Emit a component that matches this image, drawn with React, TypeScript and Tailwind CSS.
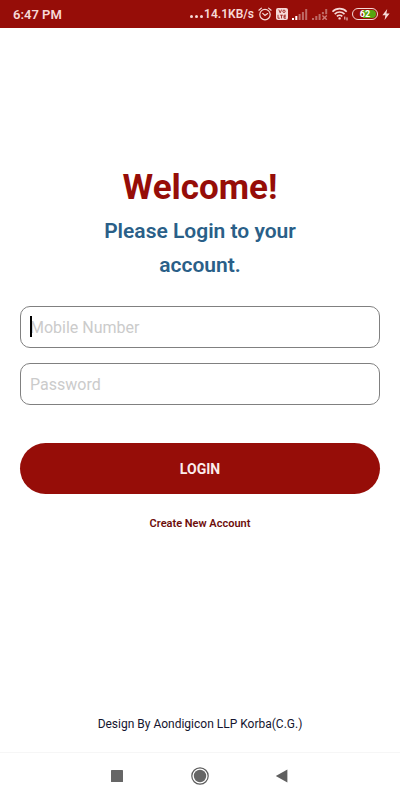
import React from 'react';

interface SignalProps {
  strong?: number;
  crossed?: boolean;
}

const AlarmIcon = () => (
  <svg className="h-[14px] w-[14px]" viewBox="0 0 14 14" fill="none" stroke="#f6d9d7" strokeWidth="1.2" strokeLinecap="round">
    <circle cx="7" cy="7.6" r="5.2" />
    <path d="M0.9 3.2 3.4 1.1M13.1 3.2 10.6 1.1" />
    <path d="M4.7 6.4 7 8.4 9.6 6.6" />
  </svg>
);

const VolteBadge = () => (
  <svg className="h-3 w-3" viewBox="0 0 12 12">
    <rect width="12" height="12" rx="2" fill="#f6d9d7" />
    <g fill="none" stroke="#960d08" strokeWidth="0.8">
      <path d="M2.8 1.6 4.2 4.8 5.6 1.6" />
      <circle cx="8" cy="3.3" r="1.2" />
      <path d="M2 6.8v3.4h1.8M4.2 7.2h2.6M5.5 7.2v3.2M10 7.2H8v3h2M8 8.7h1.8" />
    </g>
  </svg>
);

const SignalIcon: React.FC<SignalProps> = ({ strong = 0, crossed = false }) => {
  const heights = [2, 4, 6, 8, 11];
  return (
    <svg className="h-3 w-4" viewBox="0 0 16 12">
      {heights.map((h, i) =>
        crossed && i > 2 ? null : (
          <rect key={h} x={i * 3.3} y={12 - h} width="2" height={h} fill={i < strong ? '#fff' : '#bf6a66'} />
        )
      )}
      {crossed && (
        <>
          <rect x="9.9" y="4" width="2" height="2.2" fill="#bf6a66" />
          <rect x="13.2" y="1" width="2" height="5.2" fill="#bf6a66" />
          <path d="M10.4 7.4l4.4 4.4M14.8 7.4l-4.4 4.4" stroke="#cf7a76" strokeWidth="1.4" />
        </>
      )}
    </svg>
  );
};

const WifiIcon = () => (
  <svg className="h-[14px] w-4" viewBox="0 0 16 14" fill="none" stroke="#f6d9d7" strokeWidth="1.6">
    <path d="M0.5 4.7a9.8 9.8 0 0 1 14.2 0" />
    <path d="M2.7 7.1a6.8 6.8 0 0 1 9.8 0" />
    <path d="M4.9 9.4a3.8 3.8 0 0 1 5.4 0" />
    <circle cx="7.6" cy="11.4" r="1.2" fill="#f6d9d7" stroke="none" />
    <path d="M12.8 9.6v3M15 10.4v3" strokeWidth="1" />
  </svg>
);

const Battery = () => (
  <div className="flex h-3 w-[26px] rounded-full border border-[#f6d9d7] p-px">
    <div className="flex flex-1 items-center justify-center rounded-full bg-linear-to-r from-[#960d08] from-40% to-[#57a410] to-40% text-[9px] leading-none font-bold text-white">
      62
    </div>
  </div>
);

const BoltIcon = () => (
  <svg className="h-[11px] w-2" viewBox="0 0 8 11" fill="#f6d9d7">
    <path d="M5.2 0 0.4 6.2h3L2.6 11 7.6 4.4H4.4z" />
  </svg>
);

const StatusBar = () => (
  <header className="flex h-7 items-center justify-between bg-[#960d08] pr-[10px] pl-[13px] text-[12px] font-semibold text-[#f6d9d7]">
    <span className="pt-px text-[13px]">6:47 PM</span>
    <div className="flex items-center gap-1">
      <div className="flex items-center gap-px">
        <svg className="mt-1 h-[3px] w-[13px]" viewBox="0 0 13 3" fill="#f6d9d7">
          <circle cx="1.5" cy="1.5" r="1.5" />
          <circle cx="6.5" cy="1.5" r="1.5" />
          <circle cx="11.5" cy="1.5" r="1.5" />
        </svg>
        <span>14.1KB/s</span>
      </div>
      <AlarmIcon />
      <VolteBadge />
      <div className="flex gap-1">
        <SignalIcon strong={2} />
        <SignalIcon crossed />
      </div>
      <WifiIcon />
      <Battery />
      <BoltIcon />
    </div>
  </header>
);

const inputClass =
  'block h-[42px] w-full rounded-[10px] border border-[#808080] bg-white px-[9px] text-[16px] text-black outline-none placeholder:text-[#cbcbcb]';

const LoginForm = () => (
  <form className="flex flex-col" onSubmit={(e) => e.preventDefault()}>
    <div className="relative">
      <input className={inputClass} type="tel" aria-label="Mobile Number" placeholder="Mobile Number" />
      {/* Text cursor */}
      <span className="absolute top-[10px] left-[10px] h-[21px] w-0.5 bg-black" />
    </div>
    <input className={`${inputClass} mt-[15px]`} type="password" aria-label="Password" placeholder="Password" />
    <button type="submit" className="mt-[38px] h-[51px] rounded-full bg-[#960d08] pt-px text-[14px] font-bold text-[#fbeceb]">
      LOGIN
    </button>
    <a href="#register" className="mt-[22px] self-center text-[11px] leading-4 font-semibold text-[#6d0d0b]">
      Create New Account
    </a>
  </form>
);

const NavBar = () => (
  <nav className="flex h-12 items-center justify-center gap-[65px] border-t border-[#f6f6f6] pb-px">
    <button type="button" aria-label="Recent apps">
      <svg className="h-3 w-[18px]" viewBox="0 0 18 12">
        <rect x="3" width="12" height="12" rx="0.6" fill="#666" />
      </svg>
    </button>
    <button type="button" aria-label="Home">
      <svg className="h-[18px] w-[18px]" viewBox="0 0 18 18">
        <circle cx="9" cy="9" r="8.2" fill="none" stroke="#5c5c5c" strokeWidth="1.2" />
        <circle cx="9" cy="9" r="6.2" fill="#666" />
      </svg>
    </button>
    <button type="button" aria-label="Back">
      <svg className="h-[14px] w-[18px]" viewBox="0 0 18 14">
        <path d="M1.8 7 13.4 0.6v12.8z" fill="#5f5f5f" />
      </svg>
    </button>
  </nav>
);

export default function App() {
  return (
    <div className="flex min-h-screen flex-col bg-white font-[Roboto,sans-serif]">
      <StatusBar />
      <main className="flex flex-1 flex-col px-5 pt-[138px]">
        <h1 className="text-center text-[35px] leading-[44px] font-bold text-[#960d08]">Welcome!</h1>
        <p className="mx-auto mt-1 mb-6 max-w-[240px] text-center text-[21px] leading-[34px] font-semibold text-[#2a5f88]">
          Please Login to your account.
        </p>
        <LoginForm />
        <p className="mt-auto pb-5 text-center text-[12px] leading-4 text-[#15152f]">Design By Aondigicon LLP Korba(C.G.)</p>
      </main>
      <NavBar />
    </div>
  );
}
